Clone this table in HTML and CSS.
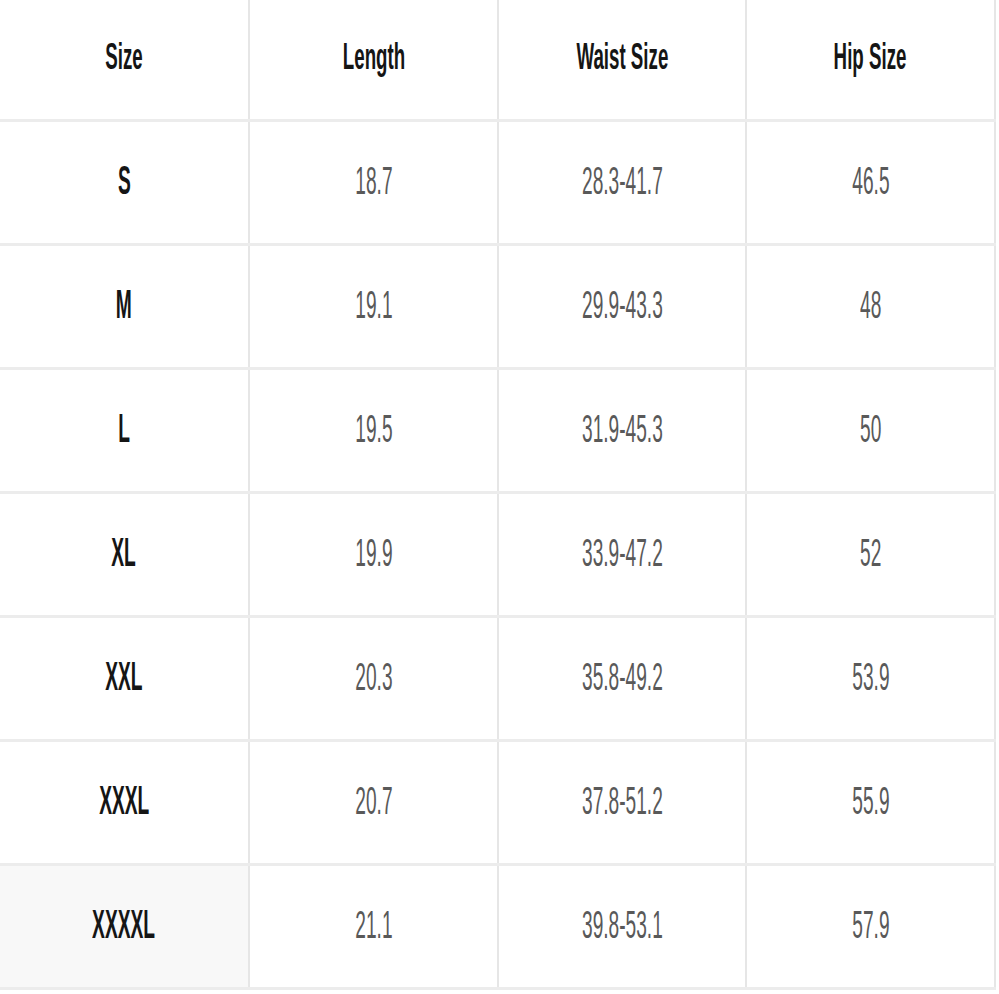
FILE: index.html
```html
<!DOCTYPE html>
<html>
<head>
<meta charset="utf-8">
<link rel="stylesheet" href="styles.css">
</head>
<body>
<div class="chart">
  <div class="row head">
    <div class="cell"><span class="t h">Size</span></div>
    <div class="cell"><span class="t h">Length</span></div>
    <div class="cell"><span class="t h">Waist Size</span></div>
    <div class="cell"><span class="t h">Hip Size</span></div>
  </div>
  <div class="row">
    <div class="cell"><span class="t b">S</span></div>
    <div class="cell"><span class="t d">18.7</span></div>
    <div class="cell"><span class="t d">28.3-41.7</span></div>
    <div class="cell"><span class="t d">46.5</span></div>
  </div>
  <div class="row">
    <div class="cell"><span class="t b">M</span></div>
    <div class="cell"><span class="t d">19.1</span></div>
    <div class="cell"><span class="t d">29.9-43.3</span></div>
    <div class="cell"><span class="t d">48</span></div>
  </div>
  <div class="row">
    <div class="cell"><span class="t b">L</span></div>
    <div class="cell"><span class="t d">19.5</span></div>
    <div class="cell"><span class="t d">31.9-45.3</span></div>
    <div class="cell"><span class="t d">50</span></div>
  </div>
  <div class="row">
    <div class="cell"><span class="t b">XL</span></div>
    <div class="cell"><span class="t d">19.9</span></div>
    <div class="cell"><span class="t d">33.9-47.2</span></div>
    <div class="cell"><span class="t d">52</span></div>
  </div>
  <div class="row">
    <div class="cell"><span class="t b">XXL</span></div>
    <div class="cell"><span class="t d">20.3</span></div>
    <div class="cell"><span class="t d">35.8-49.2</span></div>
    <div class="cell"><span class="t d">53.9</span></div>
  </div>
  <div class="row">
    <div class="cell"><span class="t b">XXXL</span></div>
    <div class="cell"><span class="t d">20.7</span></div>
    <div class="cell"><span class="t d">37.8-51.2</span></div>
    <div class="cell"><span class="t d">55.9</span></div>
  </div>
  <div class="row">
    <div class="cell shade"><span class="t b">XXXXL</span></div>
    <div class="cell"><span class="t d">21.1</span></div>
    <div class="cell"><span class="t d">39.8-53.1</span></div>
    <div class="cell"><span class="t d">57.9</span></div>
  </div>
</div>
</body>
</html>
```

FILE: styles.css
```css
html, body {
  margin: 0;
  padding: 0;
  background: #ffffff;
}
.chart {
  width: 996px;
  font-family: "Liberation Sans", Arial, sans-serif;
}
.row {
  display: grid;
  grid-template-columns: 250px 249px 248px 249px;
  height: 124px;
  box-sizing: border-box;
  border-bottom: 3px solid #ececec;
}
.row.head {
  height: 122px;
}
.cell {
  display: flex;
  align-items: center;
  justify-content: center;
  padding-bottom: 5px;
  border-right: 2px solid #e6e6e6;
  overflow: hidden;
}
.cell.shade {
  background: #f8f8f8;
}
.t {
  display: inline-block;
  white-space: nowrap;
  line-height: 1;
}
.h {
  font-size: 36px;
  font-weight: bold;
  color: #151515;
  transform: scaleX(0.52);
}
.b {
  font-size: 40px;
  font-weight: bold;
  color: #151515;
  transform: scaleX(0.48);
}
.d {
  font-size: 39px;
  color: #595959;
  transform: scaleX(0.49);
}
```
